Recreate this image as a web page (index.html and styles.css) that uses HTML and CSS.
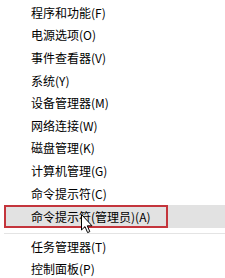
FILE: index.html
```
<!DOCTYPE html>
<html lang="zh">
<head>
    <meta charset="UTF-8">
    <meta name="viewport" content="width=device-width, initial-scale=1.0">
    <title>Win+X 菜单</title>
    <link rel="stylesheet" href="styles.css">
</head>
<body>
    <div class="menu">
        <div class="item">程序和功能(F)</div>
        <div class="item">电源选项(O)</div>
        <div class="item">事件查看器(V)</div>
        <div class="item">系统(Y)</div>
        <div class="item">设备管理器(M)</div>
        <div class="item">网络连接(W)</div>
        <div class="item">磁盘管理(K)</div>
        <div class="item">计算机管理(G)</div>
        <div class="item">命令提示符(C)</div>
        <div class="item active">
            命令提示符(管理员)(A)
            <span class="mark"></span>
            <svg class="cursor" width="13" height="20" viewBox="0 0 13 20">
                <path d="M0.5 0.5 L0.5 16 L4 12.6 L6.6 18.6 L8.8 17.6 L6.3 11.8 L11 11.8 Z" fill="#fff" stroke="#000" stroke-width="1" stroke-linejoin="miter"/>
            </svg>
        </div>
        <div class="sep"></div>
        <div class="item">任务管理器(T)</div>
        <div class="item">控制面板(P)</div>
    </div>
</body>
</html>
```

FILE: styles.css
```
body {
    margin: 0;
    background-color: #fff;
    font-family: "Noto Sans CJK SC", "Noto Sans", sans-serif;
    overflow: hidden;
}
.menu {
    display: flex;
    flex-direction: column;
    padding-top: 1px;
}
.item {
    height: 22.6px;
    display: flex;
    align-items: center;
    padding-left: 31px;
    font-size: 12px;
    color: #000;
    white-space: nowrap;
    position: relative;
}
.item.active {
    margin-left: 4px;
    padding-left: 27px;
    margin-top: 1px;
    background-color: #e2e2e2;
}
.mark {
    position: absolute;
    left: 0;
    top: 0;
    width: 160px;
    height: 19px;
    border: 2px solid #c4353c;
}
.cursor {
    position: absolute;
    left: 77px;
    top: 9px;
}
.sep {
    height: 1px;
    background-color: #e4e4e4;
    margin: 5px 0 1px 4px;
}
```
